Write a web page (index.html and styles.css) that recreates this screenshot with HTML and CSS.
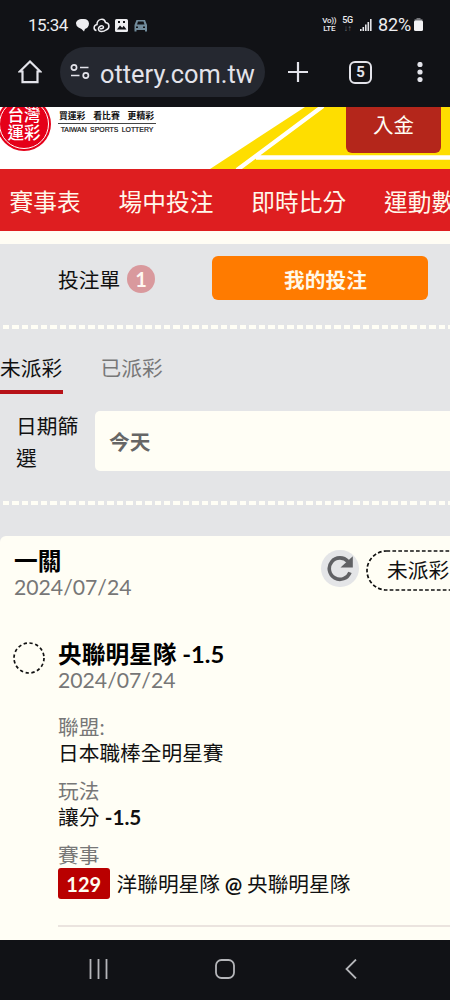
FILE: index.html
```html
<!DOCTYPE html>
<html lang="zh-Hant">
<head>
<meta charset="utf-8">
<title>台灣運彩</title>
<link rel="stylesheet" href="styles.css">
</head>
<body>
<div class="status">
  <span class="clock">15:34</span>
  <svg class="notes" width="76" height="18" viewBox="0 0 76 18">
    <path fill="#ededf0" d="M6.500 3h1.500a5 5 0 0 1 5 4.500c0 3-2 5-4 5.500L8 15.500 5.500 13 2.500 11.500A5 5 0 0 1 0 7.500C0 5 2.500 3 6.500 3Z"/>
    <path fill="none" stroke="#ededf0" stroke-width="1.500" d="M20.500 14.500c-3.500-.5-3-5.500.5-6C21 2.500 28.500 1.500 29.500 6.500c4.500.5 4.500 6.500.5 7.500-2 1.500-7 2.500-7.500-.5-.4-3.500 4.600-5 5-2.500.2 1.500-2.500 2-3.500 1.500"/>
    <rect x="39" y="3" width="13" height="13" rx="1.500" fill="#ededf0"/>
    <path fill="#111216" d="M41 13.500l3-4 2.200 2.300 1.500-2 2.800 3.700zM42 5h2v2h-2zM47 5h2v2h-2z"/>
    <path fill="#718b9b" d="M60.500 4h8.500l2 5v6.500h-2V14h-8.500v1.500h-2V9zM62 5.500 61 8.500h7.500l-1-3z"/>
    <path fill="#111216" d="M60 10.500h2v1.500h-2zM67 10.500h2v1.500h-2z"/>
  </svg>
  <span class="volte">Vo))<br>LTE</span>
  <span class="fiveg">5G<br><i>↓↑</i></span>
  <svg class="signal" width="12" height="13" viewBox="0 0 12 13" fill="#e4e4e8"><path d="M0 11h1.600v2H0zM2.500 9h1.600v4H2.500zM5 6.500h1.600V13H5zM7.500 4h1.600v9H7.500zM10 1h1.600v12H10z"/></svg>
  <span class="percent">82%</span>
  <svg class="battery" width="9" height="13" viewBox="0 0 9 13"><path fill="#77787d" d="M2.500 0h4v1.200H8.500V4h-8V1.200h2z"/><rect y="2.500" width="9" height="10.500" rx="1.500" fill="#f2f2f4"/></svg>
</div>

<div class="browser">
  <svg class="home" width="24" height="24" viewBox="0 0 24 24"><path d="M12 1.500 1.800 11.500H4.500v10.700h15V11.500h2.700z"/></svg>
  <div class="url">
    <svg width="20" height="18" viewBox="0 0 20 18"><circle cx="4" cy="4.500" r="2.600"/><circle cx="15.800" cy="12.500" r="2.600"/><path d="M10 4.500h8.500M1 12.500h8.500"/></svg>
    <span>ottery.com.tw</span>
  </div>
  <svg class="plus" width="20" height="20" viewBox="0 0 20 20"><path d="M10 0v20M0 10h20"/></svg>
  <span class="tabcount">5</span>
  <svg class="more" width="6" height="20" viewBox="0 0 6 20"><circle cx="3" cy="2.500" r="2.600"/><circle cx="3" cy="10" r="2.600"/><circle cx="3" cy="17.500" r="2.600"/></svg>
</div>

<header class="banner">
  <div class="logo"><div class="logo-ring"><span>台灣</span><span>運彩</span></div></div>
  <div class="tagline"><div class="slogan"><span>買運彩</span><span>看比賽</span><span>更精彩</span></div><div class="english">TAIWAN SPORTS LOTTERY</div></div>
  <div class="deposit-area">
    <svg class="stripes" width="240" height="62" viewBox="0 0 240 62">
      <path fill="#fede00" d="M0 62 95 0H240V62z"/>
      <path fill="none" stroke="#fff" stroke-width="4.300" d="M27 63 113-1M46 50.500H240"/>
    </svg>
    <button class="deposit">入金</button>
  </div>
</header>

<nav class="nav"><a>賽事表</a><a>場中投注</a><a>即時比分</a><a>運動數據</a></nav>

<main class="page">
  <section class="slip-tabs">
    <div class="slip">投注單<span class="badge">1</span></div>
    <button class="mybets">我的投注</button>
  </section>
  <div class="dashes"></div>
  <section class="filter">
    <div class="tabs"><a class="active">未派彩</a><a>已派彩</a></div>
    <div class="date"><label>日期篩選</label><div class="select">今天</div></div>
  </section>
  <div class="dashes"></div>
  <article class="card">
    <div class="card-head">
      <div class="title"><h2>一關</h2><time>2024/07/24</time></div>
      <span class="refresh"><svg width="28" height="28" viewBox="0 0 28 28"><path class="arc" d="M22 7.500A10.700 10.700 0 1 0 24 18.300"/><path class="tip" d="M26.800 2.200v11.300H14.500z"/></svg></span>
      <div class="state">
        <svg class="outline" width="110" height="41" viewBox="0 0 110 41"><rect x="1" y="1" width="130" height="39" rx="19.500"/></svg>
        <span>未派彩</span>
      </div>
    </div>
    <div class="bet">
      <svg class="mark" width="32" height="32" viewBox="0 0 32 32"><circle cx="16" cy="16" r="15" /></svg>
      <div class="details">
        <h3>央聯明星隊 -1.5</h3>
        <time>2024/07/24</time>
        <dl>
          <dt>聯盟:</dt><dd>日本職棒全明星賽</dd>
          <dt>玩法</dt><dd>讓分 <b>-1.5</b></dd>
          <dt>賽事</dt><dd class="match"><span class="number">129</span><span>洋聯明星隊 <b>@</b> 央聯明星隊</span></dd>
        </dl>
      </div>
    </div>
  </article>
</main>

<footer class="system">
  <svg width="20" height="20" viewBox="0 0 20 20"><path d="M1.500 0v20M9.500 0v20M17.500 0v20"/></svg>
  <svg width="20" height="20" viewBox="0 0 20 20"><rect x="1" y="1" width="18" height="18" rx="5.500"/></svg>
  <svg width="12" height="20" viewBox="0 0 12 20"><path d="M11 .5 1.500 10 11 19.500"/></svg>
</footer>
</body>
</html>
```
FILE: styles.css
```css
* { box-sizing: border-box; }
body {
  margin: 0; width: 450px; height: 1000px; overflow: hidden;
  display: flex; flex-direction: column; background: #111216;
  font-family: Lato, "Noto Sans CJK TC", sans-serif; font-size: 20.700px; color: #111;
}
body > * { flex-shrink: 0; }
h2, h3, dl, dd { margin: 0; }
button { border: 0; padding: 0; font-family: inherit; }
svg { display: block; flex-shrink: 0; }

.status { height: 47px; padding: 2px 27px 0 28px; display: flex; align-items: center; color: #ededf0; font-family: Roboto, sans-serif; }
.clock { font-size: 17px; width: 48px; letter-spacing: -.5px; }
.notes { margin-right: auto; }
.volte, .fiveg { font-size: 8px; line-height: 8px; font-weight: 500; text-align: center; letter-spacing: -.3px; }
.volte { margin-right: 6px; }
.fiveg { margin-right: 7px; font-size: 9px; }
.fiveg i { font-style: normal; color: #77787d; font-size: 8px; }
.signal { margin-right: 6px; }
.percent { font-size: 18px; margin-right: 3px; letter-spacing: -.1px; }

.browser { height: 60px; padding-left: 18px; display: flex; align-items: center; padding-bottom: 10px; }
.browser svg { fill: none; stroke: #e3e3ea; stroke-width: 2.200; }
.url { margin-left: 18px; width: 205px; height: 50px; border-radius: 25px; background: #252830; display: flex; align-items: center; padding: 4px 0 0 10px; color: #e3e3ea; font: 25.400px Roboto, sans-serif; white-space: nowrap; }
.browser .url svg { stroke-width: 1.700; margin-right: 10px; margin-top: -4px; }
.plus { margin-left: 23px; }
.tabcount { margin-left: 41px; width: 23px; height: 23px; border: 2.300px solid #e3e3ea; border-radius: 6px; color: #e3e3ea; font: bold 15px/19px Roboto, sans-serif; text-align: center; }
.browser .more { margin-left: 45px; fill: #e3e3ea; stroke: none; }

.banner { height: 62px; background: #fff; display: flex; overflow: hidden; }
.logo { width: 54px; height: 54px; margin: -10px 0 0 -3px; border-radius: 50%; background: #e50019; padding: 2px; flex-shrink: 0; }
.logo-ring { height: 50px; border: 1px solid #fff; border-radius: 50%; color: #fff; font-size: 16.500px; font-weight: 500; line-height: 18px; display: flex; flex-direction: column; align-items: center; justify-content: center; }
.tagline { width: 98px; margin: 2px 0 0 7px; flex-shrink: 0; color: #111; white-space: nowrap; }
.slogan { display: flex; justify-content: space-between; border-bottom: 1px solid #444; font-size: 8.800px; font-weight: bold; line-height: 13px; height: 15px; padding: 0 2px 0 1px; }
.english { font: 6.900px/12px "Liberation Sans", sans-serif; text-align: center; word-spacing: 1.500px; -webkit-text-stroke: .2px #111; }
.deposit-area { margin-left: 54px; width: 240px; flex-shrink: 0; display: grid; }
.stripes, .deposit { grid-area: 1 / 1; }
.deposit { margin-left: 136px; width: 95px; height: 46px; border-radius: 0 0 6px 6px; background: #b4261b; color: #fffdf4; font-size: 20.500px; line-height: 35px; padding-bottom: 9px; }

.nav { height: 62px; background: #de1e20; display: flex; gap: 38px; padding-left: 9.500px; color: #fff8eb; font-size: 23.700px; line-height: 67px; white-space: nowrap; overflow: hidden; }

.page { height: 709px; border-top: 13px solid #fffdf4; background: #e4e5e7; overflow: hidden; }
.slip-tabs { height: 81px; padding: 12px 22px 0 58px; display: flex; justify-content: space-between; }
.slip { display: flex; height: 46px; align-items: center; gap: 7px; }
.badge { width: 28px; height: 28px; border-radius: 50%; background: #d9999d; color: #fff8f2; line-height: 28px; text-align: center; font-size: 20px; font-weight: bold; }
.mybets { width: 216px; height: 44px; border-radius: 6px; background: #ff7b00; color: #fff8e8; font-size: 20.700px; font-weight: bold; padding: 2px 0 0 11px; }
.dashes { height: 4px; background: repeating-linear-gradient(90deg, #fffef5 0 6.500px, transparent 6.500px 9.470px); margin-left: 2.700px; }
.filter { height: 172px; padding-top: 20px; }
.tabs { display: flex; gap: 38px; line-height: 38px; height: 45px; color: #777; }
.tabs .active { width: 62.500px; height: 45px; border-bottom: 4.500px solid #b71218; color: #111; }
.date { display: flex; padding: 17px 0 0 16px; }
.date label { width: 79px; line-height: 31.500px; padding-right: 10px; flex-shrink: 0; }
.select { width: 370px; height: 60px; border-radius: 5px; background: #fffef5; line-height: 62px; padding-left: 14px; color: #666; font-weight: bold; flex-shrink: 0; }

.card { margin-top: 31px; height: 410px; border-radius: 6px 0 0 0; background: #fffef5; padding: 11px 0 0 14px; }
.card-head { display: flex; height: 93px; }
.title { width: 307px; flex-shrink: 0; }
h2, h3 { font-size: 23.700px; line-height: 28px; font-weight: bold; color: #000; }
time { display: block; font-size: 21.200px; line-height: 24px; color: #777; }
.refresh { width: 37.500px; height: 37.500px; margin-top: 2.500px; border-radius: 50%; background: #e4e5e7; display: grid; place-items: center; flex-shrink: 0; }
.arc { fill: none; stroke: #606164; stroke-width: 3.600; }
.tip { fill: #606164; }
.state { margin: 2.500px 0 0 7.500px; width: 110px; height: 41px; line-height: 41px; display: grid; flex-shrink: 0; white-space: nowrap; }
.state > * { grid-area: 1 / 1; }
.state span { padding-left: 21px; }
.outline rect { fill: none; stroke: #111; stroke-width: 1.700; stroke-dasharray: 3.700 2.200; }
.bet { display: flex; gap: 13px; margin-left: -1px; }
.mark { margin-top: 2px; }
.mark circle { fill: none; stroke: #111; stroke-width: 1.700; stroke-dasharray: 3.300 2.590; }
.details { width: 410px; height: 287px; border-bottom: 2px solid #ebe4df; flex-shrink: 0; }
dl { padding-top: 22px; }
dt { color: #777; line-height: 26px; height: 26px; }
dd { line-height: 26px; height: 26px; margin-bottom: 12px; }
.match { display: flex; align-items: center; gap: 7px; height: 31px; white-space: nowrap; }
.match b { margin: 0 -.5px; }
.number { background: #b90000; color: #fffdf0; width: 51.500px; height: 31px; line-height: 33px; border-radius: 3px; font-size: 20px; font-weight: bold; text-align: center; }

.system { height: 60px; display: flex; align-items: flex-start; padding: 19px 0 0 89px; }
.system svg { fill: none; stroke: #b5b6ba; stroke-width: 1.800; margin-right: 106px; }
.system svg:nth-child(2) { margin-right: 110px; }
```
